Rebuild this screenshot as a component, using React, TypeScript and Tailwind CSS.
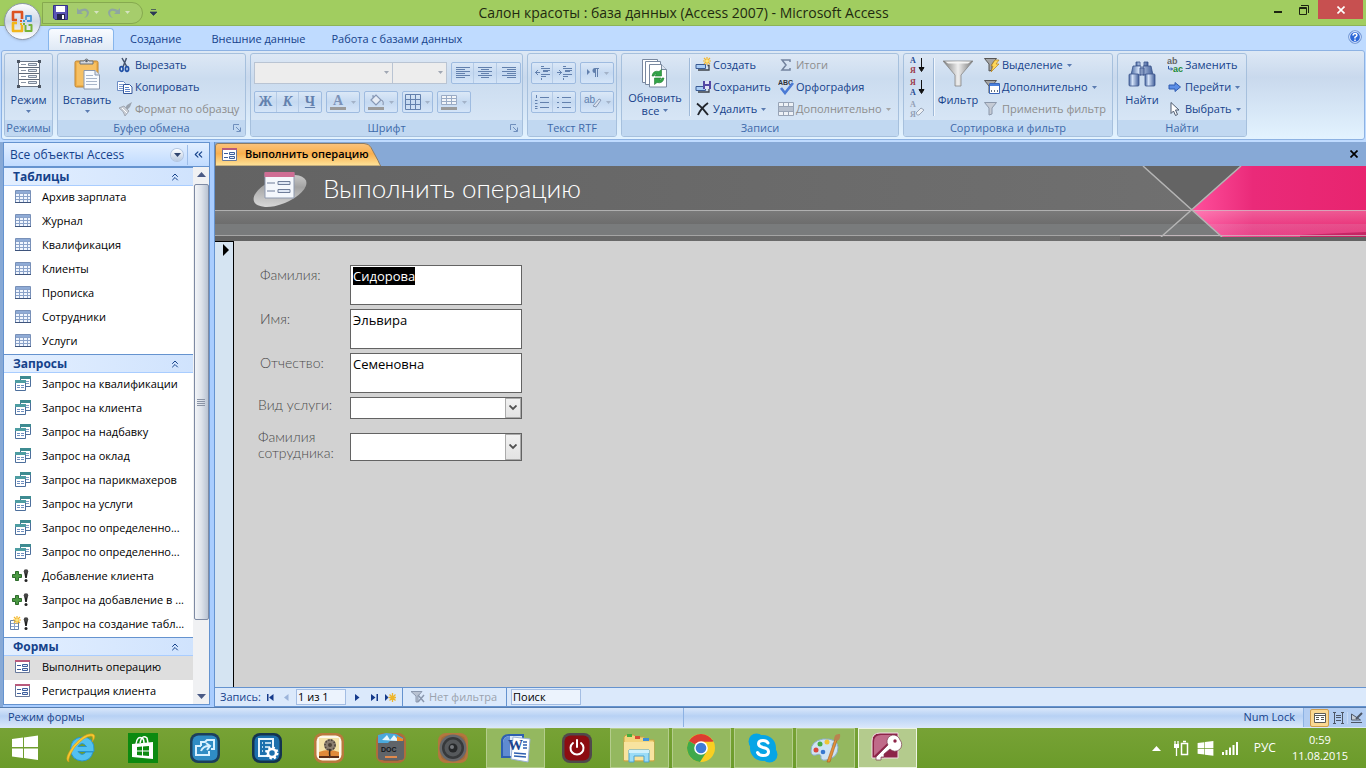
import { useEffect, useRef, type ReactNode } from "react";
import { ChevronsUp, ChevronsLeft } from "lucide-react";

/* ---------- small helpers ---------- */

function Svg({ w = 16, h = 16, box, children, className = "" }: { w?: number; h?: number; box?: string; children: ReactNode; className?: string }) {
  return (
    <svg width={w} height={h} viewBox={box ?? `0 0 ${w} ${h}`} className={`shrink-0 ${className}`} aria-hidden="true">
      {children}
    </svg>
  );
}

function Caret({ className = "text-[#5a7bb0]" }: { className?: string }) {
  return (
    <Svg w={5} h={3} className={className}>
      <path d="M0 0h5L2.5 3z" fill="currentColor" />
    </Svg>
  );
}

function Group({ title, width, launcher, children }: { title: string; width: string; launcher?: boolean; children: ReactNode }) {
  return (
    <section
      className={`flex shrink-0 flex-col overflow-hidden rounded-[3px] border border-[#a6c0dd] bg-linear-to-b from-[#dde8f5] via-[#cbdcef] via-30% to-[#dbe9f8] ${width}`}
    >
      <div className="flex flex-1 px-[3px]">{children}</div>
      <h2 className="relative h-4 shrink-0 bg-[#c1d8f1] text-center leading-4 text-[#3e6aaa]">
        {title}
        {launcher && (
          <Svg w={8} h={8} className="absolute top-1 right-1">
            <path d="M.5 6V.5H6M3 3l4 4M7.500 3.500v4h-4" fill="none" stroke="#6f8fbd" />
          </Svg>
        )}
      </h2>
    </section>
  );
}

function Big({ icon, label, width, arrow }: { icon: ReactNode; label: string; width: string; arrow?: boolean }) {
  return (
    <button className={`flex flex-col items-center pt-1 leading-3 ${width}`}>
      <span className="flex h-8 items-center">{icon}</span>
      <span className="mt-1">{label}</span>
      {arrow && <span className="mt-1"><Caret /></span>}
    </button>
  );
}

function Small({ icon, label, arrow, disabled }: { icon: ReactNode; label: string; arrow?: boolean; disabled?: boolean }) {
  return (
    <button disabled={disabled} className="flex h-[22px] items-center gap-[2px] whitespace-nowrap text-[#15428b] disabled:text-[#8d8d8d]">
      {icon}
      {label}
      {arrow && <span className="ml-[2px]"><Caret className={disabled ? "text-[#a5a5a5]" : "text-[#5a7bb0]"} /></span>}
    </button>
  );
}

function Tool({ children, label, width, arrow }: { children: ReactNode; label: string; width: string; arrow?: boolean }) {
  return (
    <button aria-label={label} className={`flex h-full items-center justify-center gap-1 text-[#6280ad] ${width}`}>
      {children}
      {arrow && <Caret className="text-[#a3b2c8]" />}
    </button>
  );
}

const toolBox = "flex h-[22px] divide-x divide-[#b5cbe6] rounded-[2px] border border-[#9ebbe0] bg-linear-to-b from-[#dbe8f7] via-[#c5d9f1] to-[#d5e5f8]";

const Sep = () => <span className="mx-1 my-1 w-px bg-[#9fb9d8] shadow-[1px_0_0_#f1f6fc]" />;

/* ---------- ribbon icons ---------- */

const ModeIcon = () => (
  <Svg w={26} h={28}>
    <path d="M2.500 1.500h21v25h-21z" fill="#fff" stroke="#6b7686" />
    <path d="M3 7.500h20M3 13.500h20M3 19.500h20" stroke="#5d6878" />
    <path d="M5 4.500h5M5 10.500h5M5 16.500h5M5 22.500h5" stroke="#8b95a5" />
    <path d="M12.500 3.500h8v2h-8zM12.500 9.500h8v2h-8zM12.500 15.500h8v2h-8zM12.500 21.500h8v2h-8z" fill="#e2eaf4" stroke="#7d8898" />
    <path d="M1 0h3v3H1zM22 0h3v3h-3zM1 25h3v3H1zM22 25h3v3h-3z" fill="#4d5663" />
  </Svg>
);

const PasteIcon = () => (
  <Svg w={28} h={32}>
    <rect x="2" y="3" width="23" height="26" rx="1.500" fill="#f0b04a" stroke="#bd8433" />
    <path d="M4 5h19v22H4z" fill="#f6c063" />
    <path d="M7 6V3h4q2.500-4 5 0h4v3z" fill="#d6d8dc" stroke="#69707a" />
    <circle cx="13.500" cy="3" r="1.300" fill="#5b616b" />
    <path d="M11 12.500h11l4.500 4.500v14H11z" fill="#f9fbfe" stroke="#8a97ad" />
    <path d="M22 12.500v4.500h4.500" fill="#dce4ef" stroke="#8a97ad" />
    <path d="M13 17.500h7M13 20.500h11M13 23.500h11M13 26.500h11" stroke="#a8b5c9" />
  </Svg>
);

const CutIcon = () => (
  <Svg>
    <path d="M5 1l5 9M9.500 1L6 10" stroke="#44536e" strokeWidth="1.500" fill="none" />
    <ellipse cx="4.500" cy="12" rx="1.600" ry="2.300" fill="none" stroke="#1f4fa5" strokeWidth="1.700" />
    <ellipse cx="10" cy="12" rx="1.600" ry="2.300" fill="none" stroke="#1f4fa5" strokeWidth="1.700" />
  </Svg>
);

const CopyIcon = () => (
  <Svg>
    <path d="M.5 2.500h6l2 2v7h-8z" fill="#fff" stroke="#6c8cc4" />
    <path d="M2 5.500h4M2 7.500h4M2 9.500h4" stroke="#7e9bd0" />
    <path d="M6.500 5.500h6l2.500 2.500v6.500H6.500z" fill="#fff" stroke="#34579b" />
    <path d="M8 8.500h4M8 10.500h5M8 12.500h5" stroke="#5b82c9" />
  </Svg>
);

const BrushIcon = () => (
  <Svg>
    <path d="M15 1l-5 3-2 3 2 2 3-3z" fill="#9ba3ae" />
    <path d="M2 7l5-2 5 5-4 5q-1-5-6-8z" fill="#c9ced6" stroke="#a2a9b4" />
    <path d="M5 7l5 5" stroke="#fff" />
  </Svg>
);

const RefreshIcon = () => (
  <Svg w={28} h={32}>
    <path d="M1.500 1.500h15v23h-15z" fill="#fff" stroke="#79889f" />
    <path d="M4.500 3.500h15v23h-15z" fill="#fff" stroke="#79889f" />
    <path d="M8.500 6.500h12l5 5V29h-17z" fill="#fff" stroke="#79889f" />
    <path d="M20.500 6.500v5h5" fill="#dbe4f0" stroke="#79889f" />
    <path d="M11 18q1-6 7-4.500l2.500-2v6.500h-6.500l2-2q-2-.5-3 2zM23 20q-1 6-7 4.500l-2.500 2V20H20l-2 2q2 .5 3-2z" fill="#33a447" stroke="#1f7a31" strokeWidth=".6" />
  </Svg>
);

const Star = ({ x, y }: { x: number; y: number }) => (
  <g transform={`translate(${x} ${y})`}>
    <path d="M0-4V4M-4 0H4M-3-3L3 3M3-3L-3 3" stroke="#f3b52b" strokeWidth="1.200" />
    <circle r="1.700" fill="#ffe680" />
  </g>
);

const RecordBar = () => (
  <>
    <path d="M1 7.500h9.500v4H1z" fill="#a9ccf5" stroke="#3a5b94" />
    <path d="M12.500 8.500H14V13H3" fill="none" stroke="#3c4149" strokeWidth="1.300" />
  </>
);

const NewIcon = () => <Svg><RecordBar /><Star x={12} y={4} /></Svg>;

const SaveRecIcon = () => (
  <Svg>
    <RecordBar />
    <path d="M8 2h8v8H8z" fill="#5549a5" />
    <path d="M10 2h4v3h-4zM10 7h4v3h-4z" fill="#e3e4f5" />
  </Svg>
);

const DeleteIcon = () => (
  <Svg>
    <path d="M2 2.500Q8 7 13 14M13 2Q6 7 3 14" fill="none" stroke="#22262d" strokeWidth="1.900" />
  </Svg>
);

const SigmaIcon = () => (
  <Svg>
    <path d="M12 5V3H4l4 5-4 5h8v-2" fill="none" stroke="#73839e" strokeWidth="1.500" />
  </Svg>
);

const SpellIcon = () => (
  <Svg>
    <text x="0" y="6" fontSize="7" fontWeight="700" fill="#30343b" fontFamily="Liberation Sans">ABC</text>
    <path d="M3 9l4 5 8-10" fill="none" stroke="#4a7ad5" strokeWidth="2.600" />
  </Svg>
);

const MoreGridIcon = () => (
  <Svg>
    <path d="M.5 1.500h15v13H.5z" fill="#edf1f6" stroke="#98a4b6" />
    <path d="M1 5.500h14M1 10.500h14M5.500 2v12M10.500 2v12" stroke="#98a4b6" />
    <path d="M1 6h14v4H1z" fill="#b6c0cf" />
  </Svg>
);

function SortIcon({ top, bottom, swap, off }: { top: string; bottom: string; swap?: boolean; off?: boolean }) {
  const a = off ? "#93a0b5" : swap ? "#9b3a4b" : "#264a92";
  const b = off ? "#93a0b5" : swap ? "#264a92" : "#9b3a4b";
  return (
    <Svg w={16} h={18}>
      <g fontSize="8" fontWeight="700" fontFamily="Liberation Serif">
        <text x="1" y="7" fill={a}>{top}</text>
        <text x="1" y="17" fill={b}>{bottom}</text>
      </g>
      {off ? (
        <path d="M7 13l5-5 3 2-5 5q-2 1-3-2z" fill="#edf0f4" stroke="#98a4b6" />
      ) : (
        <path d="M12.500 2v12M10 11.500l2.500 4 2.500-4z" fill="#111" stroke="#111" />
      )}
    </Svg>
  );
}

const Funnel = ({ fill = "#9a9a9a", stroke = "#6b6b6b" }: { fill?: string; stroke?: string }) => (
  <path d="M.5 1.500h12L8 7v6l-3 1V7z" fill={fill} stroke={stroke} />
);

const FilterIcon = () => (
  <Svg w={30} h={32}>
    <defs>
      <linearGradient id="fun">
        <stop offset="0" stopColor="#777" />
        <stop offset=".5" stopColor="#eee" />
        <stop offset="1" stopColor="#777" />
      </linearGradient>
    </defs>
    <path d="M0 3h30L18 17v11h-6V17z" fill="url(#fun)" stroke="#858585" strokeWidth=".8" />
    <path d="M2 3.500h26l-3 2H5z" fill="#f4f4f4" />
  </Svg>
);

const SelFilterIcon = () => (
  <Svg>
    <Funnel fill="#a5a5a5" stroke="#555" />
    <path d="M11 3h4l-3 4h3l-8 8 2-6H7z" fill="#ffd75a" stroke="#b3811c" strokeWidth=".7" />
  </Svg>
);

const AdvFilterIcon = () => (
  <Svg>
    <Funnel fill="#a5a5a5" stroke="#555" />
    <path d="M5.500 4.500h10v10h-10z" fill="#fff" stroke="#3a66b8" />
    <path d="M6 5h9v2H6z" fill="#4a80dc" />
    <path d="M7 12h1M10 12h1M13 12h1" stroke="#345" strokeWidth="1.300" />
  </Svg>
);

const BinocularsIcon = () => (
  <Svg w={28} h={28}>
    <defs>
      <linearGradient id="bin">
        <stop offset="0" stopColor="#4a69a2" />
        <stop offset=".35" stopColor="#d3e2f8" />
        <stop offset="1" stopColor="#3f5c97" />
      </linearGradient>
    </defs>
    <g fill="url(#bin)" stroke="#3a548a" strokeWidth=".8">
      <path d="M8 2h4v4H8zM16 2h4v4h-4z" />
      <path d="M5 6h8v9H3zM15 6h8l2 9H15zM12 8h4v7h-4z" />
      <rect x="1" y="14" width="10" height="12" rx="1" />
      <rect x="17" y="14" width="10" height="12" rx="1" />
    </g>
  </Svg>
);

const ReplaceIcon = () => (
  <Svg>
    <text x="0" y="7" fontSize="9" fontWeight="700" fontFamily="Liberation Sans" fill="#666">ab</text>
    <text x="6" y="15" fontSize="9" fontWeight="700" fontFamily="Liberation Sans" fill="#1d8a35">ac</text>
    <path d="M1.500 9v3h4M4 10.500L5.500 12 4 13.500" fill="none" stroke="#2d5cae" />
  </Svg>
);

const GoIcon = () => (
  <Svg>
    <path d="M2 6h6V3.500L13.500 8 8 12.500V10H2z" fill="#5b8ee6" stroke="#2f5bb0" />
  </Svg>
);

const CursorIcon = () => (
  <Svg>
    <path d="M4 1.500v11l2.500-2.500 2 4.500 2-1-2-4.500H12z" fill="#fff" stroke="#4d596c" />
  </Svg>
);

const lines = (xs: string) => <path d={xs} stroke="currentColor" strokeWidth="1" fill="none" />;

/* ---------- navigation pane data ---------- */

type Kind = "table" | "query" | "append" | "make" | "form";

const sections: { title: string; items: { kind: Kind; label: string; active?: boolean }[] }[] = [
  {
    title: "Таблицы",
    items: [
      { kind: "table", label: "Архив зарплата" },
      { kind: "table", label: "Журнал" },
      { kind: "table", label: "Квалификация" },
      { kind: "table", label: "Клиенты" },
      { kind: "table", label: "Прописка" },
      { kind: "table", label: "Сотрудники" },
      { kind: "table", label: "Услуги" },
    ],
  },
  {
    title: "Запросы",
    items: [
      { kind: "query", label: "Запрос на квалификации" },
      { kind: "query", label: "Запрос на клиента" },
      { kind: "query", label: "Запрос на надбавку" },
      { kind: "query", label: "Запрос на оклад" },
      { kind: "query", label: "Запрос на парикмахеров" },
      { kind: "query", label: "Запрос на услуги" },
      { kind: "query", label: "Запрос по определенно..." },
      { kind: "query", label: "Запрос по определенно..." },
      { kind: "append", label: "Добавление клиента" },
      { kind: "append", label: "Запрос на добавление в ..." },
      { kind: "make", label: "Запрос на создание табл..." },
    ],
  },
  {
    title: "Формы",
    items: [
      { kind: "form", label: "Выполнить операцию", active: true },
      { kind: "form", label: "Регистрация клиента" },
    ],
  },
];

const Bang = () => (
  <>
    <path d="M12 3h4l-1.200 7h-1.600z" fill="#222" />
    <circle cx="14" cy="3.500" r="2.300" fill="#444" />
    <circle cx="14" cy="12.500" r="1.500" fill="#222" />
  </>
);

function ItemIcon({ kind }: { kind: Kind }) {
  if (kind === "table")
    return (
      <Svg w={20}>
        <path d="M3.500 1.500h15v12h-15z" fill="#f1f6fe" stroke="#7890b8" />
        <path d="M4 2h14v2H4z" fill="#8fabd6" />
        <path d="M4 4.500h14M4 7.500h14M4 10.500h14M7.500 4v9M11.500 4v9M15.500 4v9" stroke="#8ba3ca" />
        <path d="M3 13.500h16" stroke="#3e547c" />
      </Svg>
    );
  if (kind === "query")
    return (
      <Svg w={20}>
        <path d="M8.500.5h10v10h-10z" fill="#fff" stroke="#4d6f9c" />
        <path d="M8 0h11v3H8z" fill="#3e8b91" />
        <path d="M10 5.500h7M10 7.500h7" stroke="#7f9cc6" />
        <path d="M3.500 4.500h10v10h-10z" fill="#fff" stroke="#4d6f9c" />
        <path d="M3 4h11v3H3z" fill="#4e9da2" />
        <path d="M5 9.500h3M9 9.500h3M5 11.500h3M9 11.500h3" stroke="#6f8fc0" />
      </Svg>
    );
  if (kind === "append")
    return (
      <Svg w={20}>
        <path d="M3.500 3.500h3v3h3v3h-3v3h-3v-3h-3v-3h3z" fill="#4b9a43" stroke="#2d6a2b" />
        <Bang />
      </Svg>
    );
  if (kind === "make")
    return (
      <Svg w={20} box="1 0 20 16" className="-ml-[2px] mr-[2px]">
        <path d="M1.500 4.500h8v9h-8z" fill="#fff" stroke="#6580ab" />
        <path d="M2 7.500h7M2 10.500h7M5.500 5v8" stroke="#8ba3ca" />
        <Star x={8} y={4} />
        <g transform="translate(3 0)"><Bang /></g>
      </Svg>
    );
  return (
    <Svg w={20}>
      <FormGlyph x={3} />
    </Svg>
  );
}

const FormGlyph = ({ x = 0 }: { x?: number }) => (
  <g transform={`translate(${x} 0)`}>
    <path d="M.5 1.500h14v12H.5z" fill="#fff" stroke="#66789b" />
    <path d="M0 1h15v2H0z" fill="#b85a7c" />
    <path d="M2 6.500h4M2 10.500h4" stroke="#3d5e9c" />
    <path d="M7.500 5.500h5v2h-5zM7.500 9.500h5v2h-5z" fill="#e6eefb" stroke="#3d5e9c" />
  </g>
);

/* ---------- page parts ---------- */

function TitleBar() {
  return (
    <header className="relative flex h-[26px] shrink-0 items-center border-b border-[#8db356] bg-[#a1cd60]">
      <div className="ml-[42px] flex h-[22px] w-[101px] items-center gap-2 rounded-r-full border border-[#86a94f] bg-[#a6cd6c] pl-[10px]">
        <button aria-label="Сохранить файл">
          <Svg w={15} h={15}>
            <path d="M.5.5h14v14H2L.5 13z" fill="#5a55b5" stroke="#34308a" />
            <path d="M3 1h9v6H3z" fill="#fff" />
            <path d="M4 9h8v6H4z" fill="#26264d" />
            <path d="M9 10h2v4H9z" fill="#fff" />
          </Svg>
        </button>
        <button aria-label="Отменить" className="flex items-center gap-1">
          <Svg w={14} h={14}>
            <path d="M1 2v6h6L5 6q5-3 6 1 0 3-3 5 5-1 5-6-2-6-10-2z" fill="#8fa6a0" />
          </Svg>
          <Caret className="text-[#d5e3c0]" />
        </button>
        <button aria-label="Вернуть" className="flex items-center gap-1">
          <Svg w={14} h={14}>
            <path d="M13 2v6H7l2-2Q4 3 3 7q0 3 3 5Q1 11 1 6q2-6 10-2z" fill="#8fa6a0" />
          </Svg>
          <Caret className="text-[#d5e3c0]" />
        </button>
      </div>
      <button aria-label="Настройка панели" className="ml-[7px]">
        <Svg w={7} h={7}><path d="M1 .5h5M0 3h7L3.500 6.500z" fill="#2c3a56" stroke="#2c3a56" strokeWidth=".7" /></Svg>
      </button>
      <h1 className="flex-1 pr-[54px] text-center text-sm text-[#1f2a10]">
        Салон красоты : база данных (Access 2007) - Microsoft Access
      </h1>
      <div className="flex h-full items-start">
        <button aria-label="Свернуть" className="flex h-[19px] w-7 items-center justify-center">
          <Svg w={8} h={8}><path d="M0 5h8v2H0z" fill="#1c2410" /></Svg>
        </button>
        <button aria-label="Развернуть" className="flex h-[19px] w-6 items-center justify-center">
          <Svg w={10} h={10}><path d="M2 .5h7.500V8M.5 2.500h7v7h-7zM.5 3.500h7" fill="none" stroke="#1c2410" /></Svg>
        </button>
        <button aria-label="Закрыть" className="mr-[3px] ml-[2px] flex h-[19px] w-[45px] items-center justify-center bg-[#c75050]">
          <Svg w={8} h={8}><path d="M.5.5l7 7M7.500.5l-7 7" stroke="#fff" strokeWidth="1.600" /></Svg>
        </button>
      </div>
      <button
        aria-label="Office"
        className="absolute top-[3px] left-1 z-10 flex size-[37px] items-center justify-center rounded-full border border-[#8d98ab] bg-linear-to-b from-[#fcfdfe] via-[#cfd8e6] to-[#fdfeff] shadow"
      >
        <Svg w={23} h={23}>
          <g fill="none" strokeLinejoin="round">
            <path d="M6 10H2V2h9v7" stroke="#dc5321" strokeWidth="2.600" />
            <path d="M15 10V6h5v5h-4" stroke="#4793d6" strokeWidth="1.800" />
            <path d="M6 13H2v8h9v-6" stroke="#f2b61c" strokeWidth="2.600" />
            <path d="M14.500 15v6h6v-6h-3" stroke="#76b338" strokeWidth="2" />
          </g>
          <path d="M9 10h2v2H9z" fill="#e2572a" />
          <path d="M12 10h2v2h-2z" fill="#4793d6" />
          <path d="M9 13h2v2H9z" fill="#f2b61c" />
          <path d="M12 13h2v2h-2z" fill="#76b338" />
        </Svg>
      </button>
    </header>
  );
}

function TabRow() {
  return (
    <nav className="flex h-6 shrink-0 items-end bg-[#bfdbff] pl-12 text-[#15428b]">
      <a href="#home" className="flex h-[22px] w-[66px] items-center justify-center rounded-t-[4px] border border-b-0 border-[#86b5ec] bg-linear-to-b from-[#f8fbff] to-[#dfe9f5]">
        Главная
      </a>
      <a href="#create" className="flex h-[22px] items-center pl-4">Создание</a>
      <a href="#external" className="flex h-[22px] items-center pl-[30px]">Внешние данные</a>
      <a href="#tools" className="flex h-[22px] items-center pl-[26px]">Работа с базами данных</a>
      <button aria-label="Справка" className="mr-1 mb-[6px] ml-auto">
        <Svg w={14} h={14}>
          <circle cx="7" cy="7" r="6.300" fill="#2d68d8" stroke="#7a9bd0" />
          <circle cx="7" cy="7" r="5.400" fill="none" stroke="#e5efff" />
          <path d="M5 5.500q.2-2 2-2t2 1.600Q9 6.300 7 7.300V8.500M7 9.500v1.500" fill="none" stroke="#fff" strokeWidth="1.500" />
        </Svg>
      </button>
    </nav>
  );
}

function Ribbon() {
  return (
    <div className="mx-px flex h-[90px] shrink-0 gap-1 rounded-[3px] border border-[#8db2e3] bg-linear-to-b from-[#dde8f5] via-[#c9d9ed] via-30% to-[#e3f3ff] p-[2px] text-[#15428b]">
      <Group title="Режимы" width="w-[49px]">
        <Big icon={<ModeIcon />} label="Режим" width="w-full" arrow />
      </Group>
      <Group title="Буфер обмена" width="w-[189px]" launcher>
        <Big icon={<PasteIcon />} label="Вставить" width="w-[52px]" arrow />
        <div className="ml-1">
          <Small icon={<CutIcon />} label="Вырезать" />
          <Small icon={<CopyIcon />} label="Копировать" />
          <Small icon={<BrushIcon />} label="Формат по образцу" disabled />
        </div>
      </Group>
      <Group title="Шрифт" width="w-[273px]" launcher>
        <div className="flex flex-col gap-[7px] pt-2">
          <div className="flex">
            <div className="relative">
              <select disabled aria-label="Шрифт" className="block h-[22px] w-[139px] appearance-none border border-[#b9c4d3] bg-[#ededed]" />
              <span className="absolute top-[9px] right-1 flex"><Caret className="text-[#a0a7b3]" /></span>
            </div>
            <div className="relative">
              <select disabled aria-label="Размер шрифта" className="block h-[22px] w-[54px] appearance-none border border-l-0 border-[#b9c4d3] bg-[#ededed]" />
              <span className="absolute top-[9px] right-1 flex"><Caret className="text-[#a0a7b3]" /></span>
            </div>
            <div className={`ml-1 ${toolBox}`}>
              <Tool label="По левому краю" width="w-[22px]"><Svg w={14} h={12}>{lines("M0 .5h14M0 2.500h9M0 4.500h14M0 6.500h9M0 8.500h14M0 10.500h9")}</Svg></Tool>
              <Tool label="По центру" width="w-[23px]"><Svg w={14} h={12}>{lines("M0 .5h14M3 2.500h8M0 4.500h14M3 6.500h8M0 8.500h14M3 10.500h8")}</Svg></Tool>
              <Tool label="По правому краю" width="w-[23px]"><Svg w={14} h={12}>{lines("M0 .5h14M5 2.500h9M0 4.500h14M5 6.500h9M0 8.500h14M5 10.500h9")}</Svg></Tool>
            </div>
          </div>
          <div className="flex gap-1 font-['Liberation_Serif',serif] text-sm font-bold">
            <div className={toolBox}>
              <Tool label="Полужирный" width="w-[22px]">Ж</Tool>
              <Tool label="Курсив" width="w-[22px]"><i>К</i></Tool>
              <Tool label="Подчеркнутый" width="w-[22px]"><u>Ч</u></Tool>
            </div>
            <div className={toolBox}>
              <Tool label="Цвет шрифта" width="w-[32px]" arrow>
                <Svg w={17} h={17}>
                  <text x="3" y="11" fontSize="14" fill="#7b92b8">A</text>
                  <path d="M0 13h16v3H0z" fill="#9b9b9b" />
                </Svg>
              </Tool>
            </div>
            <div className={toolBox}>
              <Tool label="Заливка" width="w-[32px]" arrow>
                <Svg w={17} h={17}>
                  <path d="M3 6l5-5 5 5-5 5zM5 5V1M13 6q3 1 2 5" fill="#e6ecf5" stroke="#8798b5" strokeWidth="1.200" />
                  <path d="M0 13h16v3H0z" fill="#9b9b9b" />
                </Svg>
              </Tool>
            </div>
            <div className={toolBox}>
              <Tool label="Сетка" width="w-[29px]" arrow>
                <Svg w={16} h={16}>{lines("M.5.5h15v15H.5zM5.500 0v16M10.500 0v16M0 5.500h16M0 10.500h16")}</Svg>
              </Tool>
            </div>
            <div className={toolBox}>
              <Tool label="Чередование цвета" width="w-[32px]" arrow>
                <Svg w={17} h={17}>
                  <path d="M.5 1.500h15v9H.5zM0 4.500h16M0 7.500h16M5.500 1v9M10.500 1v9" fill="#f2f5f9" stroke="#9aabc5" />
                  <path d="M0 13h16v3H0z" fill="#9b9b9b" />
                </Svg>
              </Tool>
            </div>
          </div>
        </div>
      </Group>
      <Group title="Текст RTF" width="w-[90px]">
        <div className="flex flex-col gap-[7px] pt-2">
          <div className="flex gap-1">
            <div className={toolBox}>
              <Tool label="Уменьшить отступ" width="w-[21px]"><Svg w={15} h={14}>{lines("M6 .5h3M6 2.500h9M8 4.500h7M8 5.500h5M6 8.500h9M6 10.500h5M6.500 12v2M0 6.500h5M3 4L.5 6.500 3 9")}</Svg></Tool>
              <Tool label="Увеличить отступ" width="w-[22px]"><Svg w={15} h={14}>{lines("M6 .5h3M6 2.500h9M8 4.500h7M8 5.500h5M6 8.500h9M6 10.500h5M6.500 12v2M0 6.500h5M2 4l2.500 2.500L2 9")}</Svg></Tool>
            </div>
            <div className={toolBox}>
              <Tool label="Направление текста" width="w-[32px]" arrow>
                <Svg w={14} h={12}>
                  <path d="M1 2l3 3-3 3z" fill="currentColor" />
                  <path d="M9 1a2.500 2.500 0 000 5z" fill="currentColor" />
                  <path d="M13 1.500H9M9.500 1v9M11.500 1v9" stroke="currentColor" fill="none" />
                </Svg>
              </Tool>
            </div>
          </div>
          <div className="flex gap-1">
            <div className={toolBox}>
              <Tool label="Нумерация" width="w-[21px]"><Svg w={15} h={14}>{lines("M1.500 0v3M0 5.500h2.500M0 8.500h2.500M0 11.500h2.500M0 13.500h2.500M5 2.500h9M5 7.500h9M5 12.500h9")}</Svg></Tool>
              <Tool label="Маркеры" width="w-[22px]"><Svg w={15} h={14}>{lines("M0 2.500h2M0 7.500h2M0 12.500h2M5 2.500h9M5 7.500h9M5 12.500h9")}</Svg></Tool>
            </div>
            <div className={toolBox}>
              <Tool label="Выделение текста" width="w-[32px]" arrow>
                <Svg w={18} h={14}>
                  <text x="0" y="8" fontSize="10" fill="currentColor" fontFamily="Liberation Sans">ab</text>
                  <path d="M9 11l6-7 2 1-5 7z" fill="#dbe3ef" stroke="#8798b5" />
                </Svg>
              </Tool>
            </div>
          </div>
        </div>
      </Group>
      <Group title="Записи" width="w-[278px]">
        <button className="flex w-[60px] flex-col items-center pt-1 leading-[13px]">
          <RefreshIcon />
          <span className="mt-px">Обновить</span>
          <span className="flex items-center gap-1">все <Caret /></span>
        </button>
        <Sep />
        <div className="ml-px w-[83px]">
          <Small icon={<NewIcon />} label="Создать" />
          <Small icon={<SaveRecIcon />} label="Сохранить" />
          <Small icon={<DeleteIcon />} label="Удалить" arrow />
        </div>
        <div>
          <Small icon={<SigmaIcon />} label="Итоги" disabled />
          <Small icon={<SpellIcon />} label="Орфография" />
          <Small icon={<MoreGridIcon />} label="Дополнительно" arrow disabled />
        </div>
      </Group>
      <Group title="Сортировка и фильтр" width="w-[210px]">
        <div className="ml-[2px] flex w-5 flex-col">
          <button aria-label="По возрастанию" className="flex h-[22px] items-center"><SortIcon top="А" bottom="Я" /></button>
          <button aria-label="По убыванию" className="flex h-[22px] items-center"><SortIcon top="Я" bottom="А" swap /></button>
          <button aria-label="Очистить сортировку" className="flex h-[22px] items-center"><SortIcon top="А" bottom="Я" off /></button>
        </div>
        <Sep />
        <Big icon={<FilterIcon />} label="Фильтр" width="w-[40px]" />
        <div className="ml-[6px]">
          <Small icon={<SelFilterIcon />} label="Выделение" arrow />
          <Small icon={<AdvFilterIcon />} label="Дополнительно" arrow />
          <Small icon={<Svg><Funnel fill="#c5cbd5" stroke="#8c98ab" /></Svg>} label="Применить фильтр" disabled />
        </div>
      </Group>
      <Group title="Найти" width="w-[130px]">
        <Big icon={<BinocularsIcon />} label="Найти" width="w-[42px]" />
        <div className="ml-1">
          <Small icon={<ReplaceIcon />} label="Заменить" />
          <Small icon={<GoIcon />} label="Перейти" arrow />
          <Small icon={<CursorIcon />} label="Выбрать" arrow />
        </div>
      </Group>
    </div>
  );
}

function NavPane() {
  return (
    <aside className="flex w-[215px] shrink-0 border-r border-[#6593cf] bg-[#a9cdff]">
      <div className="w-[3px] bg-[#87a9d6]" />
      <div className="mb-[2px] flex w-[207px] flex-col border border-[#6593cf] bg-white">
        <div className="flex h-6 shrink-0 items-center border-b border-[#6593cf] bg-linear-to-b from-[#e3efff] to-[#c0dbff] pl-[6px] text-xs text-[#15428b]">
          <span className="flex-1">Все объекты Access</span>
          <button aria-label="Список объектов" className="flex size-3 items-center justify-center rounded-full bg-linear-to-b from-white to-[#b9c9df] ring-1 ring-[#b4c6df]">
            <Svg w={7} h={4}><path d="M0 0h7L3.500 4z" fill="#30456e" /></Svg>
          </button>
          <button aria-label="Свернуть область" className="ml-1 flex h-5 w-[22px] items-center justify-center border-l border-[#9dbde8]">
            <ChevronsLeft size={13} strokeWidth={2} />
          </button>
        </div>
        <div className="flex min-h-0 flex-1">
          <div className="flex-1 overflow-hidden">
            {sections.map((s) => (
              <section key={s.title}>
                <h2 className="flex h-[19px] items-center border-t border-b border-t-[#6593cf] border-b-[#a9cdff] bg-linear-to-r from-[#e3efff] to-[#d0e3fd] pr-3 pl-[9px] text-xs font-bold text-[#15428b]">
                  <span className="flex-1">{s.title}</span>
                  <ChevronsUp size={12} />
                </h2>
                <ul>
                  {s.items.map((it, i) => (
                    <li key={i}>
                      <a
                        href="#object"
                        className={
                          it.active
                            ? "flex h-6 items-center gap-[10px] bg-[#dedede] pb-[2px] pl-2 whitespace-nowrap"
                            : "flex h-6 items-center gap-[10px] pb-[2px] pl-2 whitespace-nowrap"
                        }
                      >
                        <ItemIcon kind={it.kind} />
                        {it.label}
                      </a>
                    </li>
                  ))}
                </ul>
              </section>
            ))}
          </div>
          <div className="flex w-4 flex-col items-center bg-[#f0f1f3] py-[5px]" aria-hidden="true">
            <Svg w={9} h={5}><path d="M0 5h9L4.500 0z" fill="#4a5a85" /></Svg>
            <div className="mt-[7px] mb-[74px] flex w-[15px] flex-1 items-center justify-center rounded-[2px] border border-[#7e8aa3] bg-linear-to-r from-[#f3f5f8] via-[#dde2ea] to-[#b9c3d2]">
              <Svg w={8} h={7}><path d="M0 .5h8M0 2.500h8M0 4.500h8M0 6.500h8" stroke="#8a93a5" /></Svg>
            </div>
            <Svg w={9} h={5}><path d="M0 0h9L4.500 5z" fill="#4a5a85" /></Svg>
          </div>
        </div>
      </div>
    </aside>
  );
}

function Banner() {
  return (
    <div className="relative flex h-[75px] shrink-0 flex-col bg-linear-to-r from-[#636363] to-[#727272]">
      <div className="z-10 flex h-11 items-center gap-4 pl-[38px]">
        <Svg w={54} h={42}>
          <defs>
            <linearGradient id="disc" x1="0" y1="1" x2="1" y2="0">
              <stop offset="0" stopColor="#e9e9e9" />
              <stop offset=".6" stopColor="#a3a3a3" />
              <stop offset="1" stopColor="#dcdcdc" />
            </linearGradient>
          </defs>
          <ellipse cx="27" cy="24" rx="28" ry="13" transform="rotate(-22 27 24)" fill="url(#disc)" />
          <path d="M12 6h29v25H12z" fill="#f4f7fc" stroke="#8f9ab0" />
          <path d="M11.500 5h30v5h-30z" fill="#cf6d94" />
          <path d="M14 16h8M14 24h8" stroke="#6f7d99" />
          <path d="M25 14.500h12v3H25zM25 22.500h12v3H25z" fill="#dfe7f4" stroke="#6f7d99" />
        </Svg>
        <h1 className="font-['Lato',sans-serif] text-[26px] font-light text-white">Выполнить операцию</h1>
      </div>
      <div className="h-[14px] border-t border-[#b0b0b0] bg-linear-to-b from-[#7a7a7a] to-[#6d6d6d]" />
      <div className="h-3 border-b border-[#a5a5a5] bg-[#797b7c]" />
      <svg width="246" height="75" viewBox="0 0 246 75" className="absolute top-0 right-0" aria-hidden="true">
        <defs>
          <linearGradient id="pink">
            <stop offset="0" stopColor="#ff4f9c" />
            <stop offset=".35" stopColor="#ea2a79" />
            <stop offset="1" stopColor="#e8246f" />
          </linearGradient>
          <linearGradient id="gloss" x1="0" x2="0" y1="0" y2="1">
            <stop offset="0" stopColor="#fff" stopOpacity=".25" />
            <stop offset=".5" stopColor="#fff" stopOpacity=".1" />
            <stop offset=".51" stopColor="#dfe9ee" stopOpacity=".22" />
            <stop offset="1" stopColor="#dfe9ee" stopOpacity=".12" />
          </linearGradient>
        </defs>
        <path d="M23 0h98L72 44z" fill="#646464" />
        <path d="M121 0h125v71H102L72 44z" fill="url(#pink)" />
        <path d="M72 44h174v27H102z" fill="url(#gloss)" />
        <path d="M180 69l66-3v5h-66z" fill="#b01350" opacity=".6" />
        <path d="M0 44.500h246M0 69.500h246" stroke="#d0c0c6" opacity=".7" />
        <path d="M23 0l79 71M121 0L41 71" stroke="#b5b5b5" strokeWidth="1.500" />
        <path d="M0 71h246v4H0z" fill="#636363" />
      </svg>
    </div>
  );
}

const fieldClass = "block w-[172px] rounded-none border border-[#636363] bg-white px-[2px] text-[13px] text-black outline-none";
const areaClass = `h-10 resize-none overflow-hidden pt-px font-['Open_Sans',sans-serif] leading-[18px] font-normal ${fieldClass}`;

function FormBody() {
  const first = useRef<HTMLTextAreaElement>(null);

  useEffect(() => {
    first.current?.focus();
    first.current?.select();
  }, []);

  return (
    <div className="flex min-h-0 flex-1">
      <div className="w-[19px] shrink-0 border-t border-r border-black bg-[#d5e4f2]">
        <Svg w={6} h={12} className="mt-[2px] ml-2"><path d="M0 0l6 6-6 6z" fill="#000" /></Svg>
      </div>
      <form className="flex flex-1 flex-col gap-1 bg-[#d2d2d2] pt-6 pl-6 font-['Lato',sans-serif] text-sm font-light text-[#4c4c4c]">
        <div className="flex">
          <label htmlFor="surname" className="w-[92px] pl-[2px]">Фамилия:</label>
          <textarea ref={first} id="surname" defaultValue="Сидорова" className={`selection:bg-black selection:text-white ${areaClass}`} />
        </div>
        <div className="flex">
          <label htmlFor="name" className="w-[92px] pl-[2px]">Имя:</label>
          <textarea id="name" defaultValue="Эльвира" className={areaClass} />
        </div>
        <div className="flex">
          <label htmlFor="patronymic" className="w-[92px] pl-[2px]">Отчество:</label>
          <textarea id="patronymic" defaultValue="Семеновна" className={areaClass} />
        </div>
        <div className="flex">
          <label htmlFor="service" className="w-[92px] leading-4">Вид услуги:</label>
          <div className="relative">
            <select id="service" className={`h-[22px] appearance-none ${fieldClass}`} />
            <ComboArrow />
          </div>
        </div>
        <div className="mt-[6px] flex items-end">
          <label htmlFor="employee" className="w-[92px] leading-4">Фамилия<br />сотрудника:</label>
          <div className="relative">
            <select id="employee" className={`h-7 appearance-none ${fieldClass}`} />
            <ComboArrow />
          </div>
        </div>
      </form>
    </div>
  );
}

const ComboArrow = () => (
  <span className="pointer-events-none absolute inset-y-px right-px flex w-4 items-center justify-center border border-[#ababab] bg-linear-to-b from-[#f1f1f1] to-[#e3e3e3]">
    <Svg w={8} h={6}><path d="M.5.5L4 4 7.500.5" fill="none" stroke="#505050" strokeWidth="1.800" /></Svg>
  </span>
);

function RecordNav() {
  return (
    <div className="flex h-5 shrink-0 items-center border-t border-b border-[#6593cf] bg-[#dbe9fb] pl-[5px] text-[#15428b]">
      <span className="w-11">Запись:</span>
      <button aria-label="Первая запись" className="flex w-3 justify-center"><Svg w={7} h={7}><path d="M0 0h1.500v7H0zM6.500 0v7L2 3.500z" fill="#153a8b" /></Svg></button>
      <button aria-label="Предыдущая запись" className="flex w-5 justify-center"><Svg w={5} h={7}><path d="M4.500 0v7L0 3.500z" fill="#9cb4da" /></Svg></button>
      <input aria-label="Номер записи" defaultValue="1 из 1" className="h-4 w-[50px] border border-[#a3bde3] bg-[#ecf3fd] px-px text-black" />
      <button aria-label="Следующая запись" className="ml-2 flex w-[6px] justify-center"><Svg w={5} h={7}><path d="M0 0v7l4.500-3.500z" fill="#153a8b" /></Svg></button>
      <button aria-label="Последняя запись" className="ml-[10px] flex w-2 justify-center"><Svg w={7} h={7}><path d="M5.500 0H7v7H5.500zM0 0v7l4.500-3.500z" fill="#153a8b" /></Svg></button>
      <button aria-label="Новая запись" className="ml-[6px] flex w-3 justify-center">
        <Svg w={11} h={9}>
          <path d="M0 1v7l3.500-3.500z" fill="#153a8b" />
          <path d="M7.500 0v9M3.500 4.500H11M4.500 1.500l6 6M10.500 1.500l-6 6" stroke="#eeb62d" strokeWidth="1.300" />
        </Svg>
      </button>
      <span className="mr-2 ml-[6px] h-full w-px bg-[#6593cf]" />
      <button disabled className="flex items-center gap-1 text-[#9aa2ad]">
        <Svg w={14} h={12}>
          <path d="M0 .5h11L7 5v6H5V5z" fill="#b8c2d2" stroke="#8b98ae" />
          <path d="M7 4l6 7M13 4l-6 7" stroke="#8b98ae" strokeWidth="1.500" />
        </Svg>
        Нет фильтра
      </button>
      <span className="mr-1 ml-[9px] h-full w-px bg-[#6593cf]" />
      <input aria-label="Поиск" defaultValue="Поиск" className="h-4 w-[70px] border border-[#a3bde3] bg-[#ecf3fd] px-px text-black" />
    </div>
  );
}

function StatusBar() {
  return (
    <div className="flex h-[21px] shrink-0 items-center border-t border-[#567db0] bg-linear-to-b from-[#d9e7fa] via-[#b7d1f4] via-40% to-[#dbe8fa] pb-px text-[#15428b]">
      <span className="w-1/2 pl-2">Режим формы</span>
      <div className="flex h-full flex-1 items-center justify-end border-l border-[#8db2e3] pr-2">Num Lock</div>
      <div className="flex h-full items-center border-l border-[#8db2e3] bg-[#b3cdf2] pl-[6px]">
        <button aria-label="Режим формы" className="flex h-[18px] w-[19px] items-center justify-center rounded-[2px] border border-[#cf9d4e] bg-[#fbd891]">
          <Svg w={12} h={10}><path d="M.5.5h11v9H.5zM0 2.500h12M2 4.500h3M2 6.500h3M7 4.500h3M7 6.500h3" fill="#fff" stroke="#5b5a55" /></Svg>
        </button>
        <button aria-label="Режим макета" className="flex w-[18px] justify-center">
          <Svg w={11} h={12}><path d="M0 .5h3M8 .5h3M0 11.500h3M8 11.500h3M1.500 0v12M9.500 0v12M3 3.500h5M3 5.500h5M3 8.500h5" fill="none" stroke="#4d5666" /></Svg>
        </button>
        <button aria-label="Конструктор" className="flex w-[19px] justify-center border-l border-[#c9dbf5]">
          <Svg w={12} h={12}><path d="M.5 2v6h9zM0 10.500h11" fill="#c6cbd3" stroke="#4d5666" /><path d="M11 1L5 7" stroke="#4d5666" strokeWidth="2" /></Svg>
        </button>
      </div>
    </div>
  );
}

/* ---------- taskbar ---------- */

const WinLogo = ({ size }: { size: number }) => (
  <Svg w={size} h={size} box="0 0 28 28">
    <path d="M1 5l11-1.500V13H1zM13 3.400L27 1.500V13H13zM1 14.500h11V24L1 22.500zM13 14.500h14V26l-14-1.900z" fill="#fff" />
  </Svg>
);

const Tile = ({ rim, fill, children }: { rim: string; fill: string; children: ReactNode }) => (
  <Svg w={32} h={32}>
    <rect x="1" y="1" width="30" height="30" rx="8" fill={rim} />
    <rect x="3.500" y="3.500" width="25" height="25" rx="6" fill={fill} />
    {children}
  </Svg>
);

const apps: { label: string; open?: boolean; active?: boolean; icon: ReactNode }[] = [
  {
    label: "Internet Explorer",
    icon: (
      <Svg w={32} h={32}>
        <path d="M28 20h-7q-4 5-8-.500h16Q30 5 17 5 6 6 5.500 17 6 28 17 29q9-.500 11-9zM13 14.500q4-6 8.500 0z" fill="#53c1f0" stroke="#2795cf" />
        <path d="M4 30Q-2 28 8 14 20 0 28 2q4 2-1 8 2-6-1-6-6 0-16 11Q2 27 4 30z" fill="#f8c932" stroke="#d69c14" strokeWidth=".6" />
      </Svg>
    ),
  },
  {
    label: "Магазин",
    icon: (
      <Svg w={32} h={32}>
        <path d="M1 1h30v30H1z" fill="#0c8a10" />
        <path d="M5 12l21-2v17L5 25z" fill="#fff" />
        <path d="M9 12q1-8 6-6 2 1 2 5M13 11q2-9 7-5l1 5" fill="none" stroke="#fff" strokeWidth="1.500" />
        <path d="M10 15l5-.5v4h-5zM16 14.400l6-.5v4.600h-6zM10 19.500h5v4l-5-.5zM16 19.500h6v4.600l-6-.5z" fill="#0c8a10" />
      </Svg>
    ),
  },
  {
    label: "Обмен",
    icon: (
      <Tile rim="#1c3f5c" fill="#2f8cc4">
        <path d="M12 14H7v9h13v-4M12 14v-4h4l2-2h7v9h-3" fill="none" stroke="#d8f1ff" strokeWidth="2" />
        <path d="M12 19q2-5 8-5M17 11l4 3-3 4" fill="none" stroke="#d8f1ff" strokeWidth="2" />
      </Tile>
    ),
  },
  {
    label: "Настройки",
    icon: (
      <Tile rim="#14344f" fill="#1c70ad">
        <path d="M8 7h14v17H8z" fill="none" stroke="#e6f6ff" strokeWidth="2" />
        <path d="M11 11h1M14 11h6M11 15h1M14 15h5M11 19h1M14 19h3" stroke="#e6f6ff" strokeWidth="1.500" />
        <circle cx="21" cy="21" r="4" fill="#1c70ad" stroke="#fff" strokeWidth="2.500" />
        <circle cx="21" cy="21" r="5.500" fill="none" stroke="#fff" strokeWidth="2" strokeDasharray="2.300 2" />
      </Tile>
    ),
  },
  {
    label: "Галерея",
    icon: (
      <Tile rim="#b9783d" fill="#fdf8ea">
        <path d="M6 6h20v20H6z" fill="#f5e3a8" />
        <path d="M6 20q10-4 20 0v6H6z" fill="#e08a3a" />
        <circle cx="17" cy="13" r="6" fill="#8b7f70" />
        <circle cx="17" cy="13" r="5" fill="none" stroke="#4e4438" strokeDasharray="1.500 1.500" strokeWidth="1.500" />
        <circle cx="17" cy="13" r="2" fill="#4e4438" />
        <path d="M17 17q-1 4 0 9" stroke="#33251a" strokeWidth="1.500" />
        <path d="M6 24h20v2H6z" fill="#5b2d18" />
      </Tile>
    ),
  },
  {
    label: "Документы",
    icon: (
      <Tile rim="#b06c3c" fill="#4b4e52">
        <path d="M3 3l8-2 10 1 7 4v6H3z" fill="#4aa9dc" />
        <path d="M7 8l5-5 3 5 4-5 5 6z" fill="#e9f6fd" />
        <path d="M22 4l6 3v5h-6z" fill="#f18a28" />
        <path d="M3 11h10l2-2h14v16q0 3-3 3H6q-3 0-3-3z" fill="#606469" />
        <text x="6" y="20" fontSize="7" fontWeight="700" fill="#15171a" fontFamily="Liberation Sans">DOC</text>
        <path d="M10 24h12v2H10z" fill="#e08a4d" />
      </Tile>
    ),
  },
  {
    label: "Звук",
    icon: (
      <Tile rim="#b3763f" fill="#a26a3a">
        <circle cx="16" cy="16" r="13.500" fill="#66686b" />
        <circle cx="16" cy="16" r="11" fill="#37393b" />
        <circle cx="16" cy="16" r="8.500" fill="#56595c" />
        <circle cx="16" cy="16" r="4.500" fill="#26282a" />
        <circle cx="15" cy="15" r="2" fill="#75787c" />
      </Tile>
    ),
  },
  {
    label: "Word",
    open: true,
    icon: (
      <Svg w={32} h={32}>
        <path d="M2 10Q2 2 10 2h15v24H2z" fill="#2e5fb0" />
        <path d="M4 11q0-7 7-7h12v20H4z" fill="#dce8f8" />
        <path d="M4 11q0-7 7-7v20H4z" fill="#5f8bd0" />
        <path d="M14 5l17 2-2 23-17-3z" fill="#fff" stroke="#9db3d8" />
        <text x="9" y="18" fontSize="15" fontWeight="700" fill="#1e4690" fontFamily="Liberation Serif">W</text>
        <path d="M24 10h4M24 13h4M24 16h4M15 21l12 1M15 24l12 1" stroke="#2e5fb0" strokeWidth="1.600" />
      </Svg>
    ),
  },
  {
    label: "Выключение",
    icon: (
      <Tile rim="#50494b" fill="#8c0d11">
        <path d="M12 11a6.500 6.500 0 108 0M16 8v7" fill="none" stroke="#fff" strokeWidth="2" strokeLinecap="round" />
      </Tile>
    ),
  },
  {
    label: "Проводник",
    open: true,
    icon: (
      <Svg w={32} h={32}>
        <path d="M1 5l2-2h8l2 2h8l2 3h8v21H1z" fill="#f3d57d" stroke="#c9a143" />
        <path d="M4 2h5v3H4z" fill="#46ad3e" />
        <path d="M12 4h5v3h-5z" fill="#d84c35" />
        <path d="M20 6h6v3h-6z" fill="#3e8dd6" />
        <path d="M1 10h30v18H1z" fill="#f8e39f" />
        <path d="M6 18h20v12h-5v-6H11v6H6z" fill="#9bdcf7" stroke="#4aa3cf" />
        <path d="M6 18h20v3H6z" fill="#cff0fc" />
      </Svg>
    ),
  },
  {
    label: "Chrome",
    open: true,
    icon: (
      <Svg w={32} h={32}>
        <circle cx="16" cy="16" r="14" fill="#f9cf22" />
        <path d="M16 16L3.900 9A14 14 0 0128.100 9z" fill="#dd3d31" />
        <path d="M3.900 9A14 14 0 0015 30l7-11-6-3z" fill="#3fa94b" />
        <path d="M16 9.500h12.300L22 19z" fill="#f9cf22" />
        <path d="M16 9.500h12.300L27.500 8H14z" fill="#dd3d31" />
        <circle cx="16" cy="16" r="6.800" fill="#fff" />
        <circle cx="16" cy="16" r="5.300" fill="#3e7bd6" />
      </Svg>
    ),
  },
  {
    label: "Skype",
    open: true,
    icon: (
      <Svg w={32} h={32}>
        <circle cx="16" cy="16" r="13" fill="#06a5e6" />
        <circle cx="9.500" cy="9.500" r="8" fill="#06a5e6" />
        <circle cx="22.500" cy="22.500" r="8" fill="#06a5e6" />
        <path d="M21 11Q19.500 8.500 16 8.500q-4.500 0-4.500 3.300 0 2.700 4.500 3.700 5.500 1 5.500 4.200 0 3.800-5.500 3.800-4 0-5.500-3" fill="none" stroke="#fff" strokeWidth="3" strokeLinecap="round" />
      </Svg>
    ),
  },
  {
    label: "Paint",
    open: true,
    icon: (
      <Svg w={32} h={32}>
        <path d="M2 19Q2 9 14 7q14-1 15 8 0 11-12 13-6 1-5-4-1-3-5-1-5 1-5-4z" fill="#cfe3f3" stroke="#8caecb" />
        <circle cx="7" cy="18" r="2.500" fill="#d9483b" />
        <circle cx="11" cy="12" r="2.500" fill="#47ac45" />
        <circle cx="18" cy="10" r="2.500" fill="#efc534" />
        <circle cx="25" cy="13" r="2.500" fill="#8ecaf0" />
        <circle cx="14" cy="20" r="2.300" fill="#3878cf" />
        <path d="M18 30L26 7l2 1-7 22z" fill="#e3913b" stroke="#a7601b" strokeWidth=".6" />
        <path d="M25 8q0-7 6-6 1 5-3 7z" fill="#b98350" />
      </Svg>
    ),
  },
  {
    label: "Access",
    open: true,
    active: true,
    icon: (
      <Svg w={32} h={32}>
        <path d="M1 9q0-8 8-8h18v25H1z" fill="#8d2448" stroke="#f3dce5" />
        <path d="M3 10q0-7 7-7h15L3 24z" fill="#c06a89" />
        <path d="M28 6a6.500 6.500 0 00-11 7L5 25v3h5v-3h3v-3l6-5a6.500 6.500 0 0010-9z" fill="#fff" stroke="#7b3c52" strokeWidth=".7" />
        <circle cx="24" cy="9" r="1.700" fill="#8d2448" />
      </Svg>
    ),
  },
];

function Taskbar() {
  return (
    <footer className="flex h-10 shrink-0 items-center bg-linear-to-b from-[#77a235] to-[#6b9b2a] text-white">
      <button aria-label="Пуск" className="flex w-[50px] justify-center"><WinLogo size={28} /></button>
      {apps.map((a) => (
        <div key={a.label} className="flex h-full w-[62px] shrink-0 justify-center">
          <button
            aria-label={a.label}
            className={
              a.active
                ? "flex w-[59px] items-center justify-center border border-[#edf4e1] bg-[#b4cb8d]"
                : a.open
                  ? "flex w-[59px] items-center justify-center border border-[#b4cd8c] bg-[#94b85f]"
                  : "flex w-[59px] items-center justify-center"
            }
          >
            {a.icon}
          </button>
        </div>
      ))}
      <div className="ml-auto flex items-center gap-2 pr-[18px]">
        <button aria-label="Скрытые значки"><Svg w={9} h={5}><path d="M0 5h9L4.500 0z" fill="#fff" /></Svg></button>
        <Svg w={16} h={16} className="ml-1">
          <path d="M2 1v3M5 1v3M3.500 8v8" stroke="#fff" fill="none" strokeWidth="1.300" />
          <path d="M1 4h5v4H1z" fill="#fff" />
          <path d="M8.500 3.500h6v11h-6zM10 1.500h3" fill="none" stroke="#fff" strokeWidth="1.500" />
        </Svg>
        <WinLogo size={17} />
        <Svg w={16} h={14}><path d="M0 11h2v3H0zM3.500 9h2v5h-2zM7 6.500h2V14H7zM10.500 4h2v10h-2zM14 1h2v13h-2z" fill="#fff" /></Svg>
        <span className="ml-2 text-xs">РУС</span>
        <div className="ml-2 text-center leading-4">
          <div>0:59</div>
          <div>11.08.2015</div>
        </div>
      </div>
    </footer>
  );
}

export default function App() {
  return (
    <div className="flex h-screen flex-col overflow-hidden bg-[#bfdbff] font-['Open_Sans','Noto_Sans',sans-serif] text-[11px] text-black">
      <TitleBar />
      <TabRow />
      <Ribbon />
      <main className="mt-[2px] flex min-h-0 flex-1">
        <NavPane />
        <div className="flex min-w-0 flex-1 flex-col">
          <div className="flex h-6 shrink-0 items-end bg-[#87a9d6]">
            <div className="relative flex h-[23px] w-[166px] items-center">
              <svg width="166" height="23" className="absolute inset-0" aria-hidden="true">
                <defs>
                  <linearGradient id="tab" x1="0" x2="0" y1="0" y2="1">
                    <stop offset="0" stopColor="#fbc37c" />
                    <stop offset=".45" stopColor="#f9b04f" />
                    <stop offset="1" stopColor="#fee49b" />
                  </linearGradient>
                </defs>
                <path d="M.5 23V3q0-2.500 2.500-2.500h146q5 0 7 4l7 13q2 5 3 5.500z" fill="url(#tab)" stroke="#8d7b63" />
              </svg>
              <Svg w={15} h={15} className="z-10 ml-[7px]"><FormGlyph /></Svg>
              <span className="z-10 ml-2 font-semibold whitespace-nowrap">Выполнить операцию</span>
            </div>
            <button aria-label="Закрыть вкладку" className="mr-2 mb-2 ml-auto">
              <Svg w={8} h={8}><path d="M.5.5l7 7M7.500.5l-7 7" stroke="#000" strokeWidth="1.700" /></Svg>
            </button>
          </div>
          <Banner />
          <FormBody />
          <RecordNav />
        </div>
      </main>
      <StatusBar />
      <Taskbar />
    </div>
  );
}
